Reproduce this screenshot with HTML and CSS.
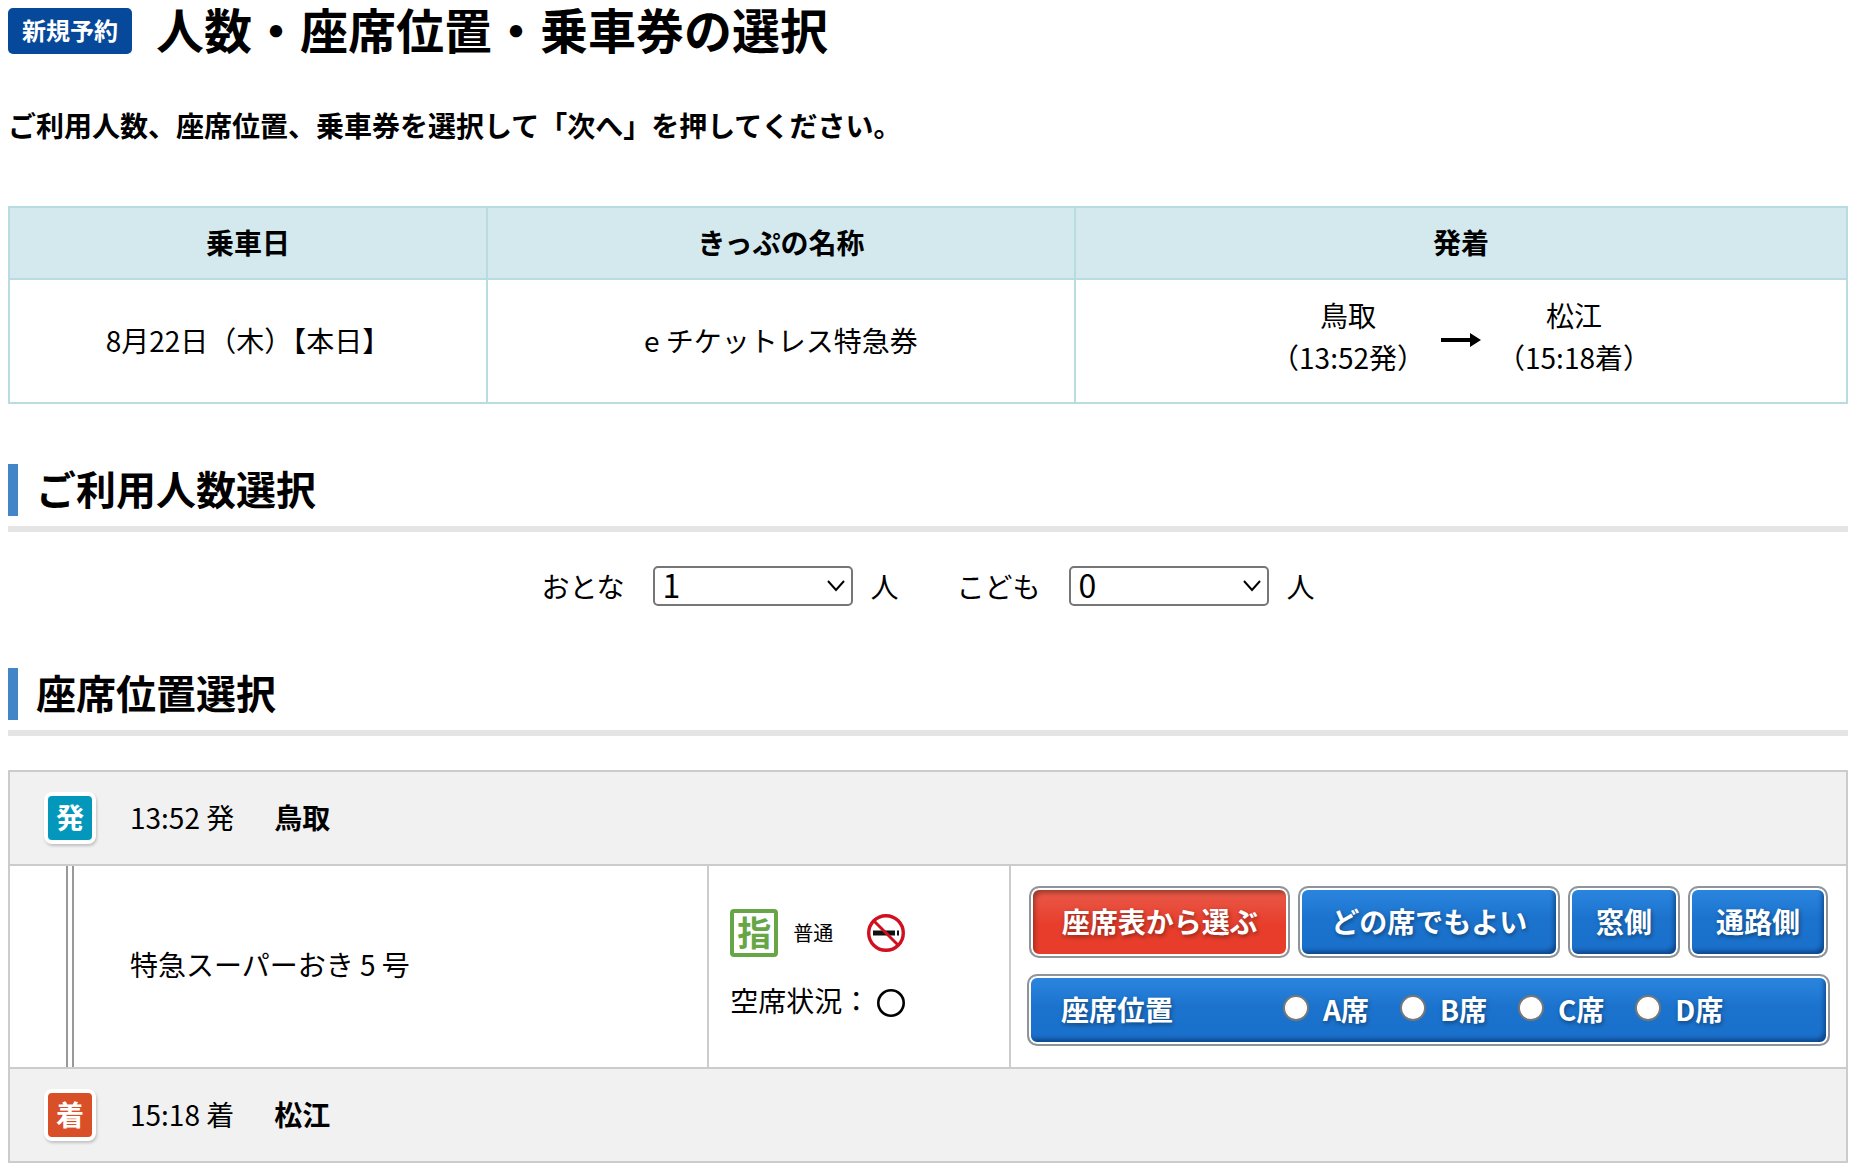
FILE: index.html
```html
<!DOCTYPE html>
<html lang="ja">
<head>
<meta charset="utf-8">
<meta name="viewport" content="width=device-width, initial-scale=1">
<title>人数・座席位置・乗車券の選択</title>
<link rel="stylesheet" href="styles.css">
</head>
<body>
<main class="page">
  <header class="page-head">
    <span class="badge">新規予約</span>
    <h1 class="page-title">人数・座席位置・乗車券の選択</h1>
  </header>
  <p class="lead">ご利用人数、座席位置、乗車券を選択して「次へ」を押してください。</p>

  <table class="summary">
    <colgroup><col class="col-date"><col class="col-name"><col></colgroup>
    <thead>
      <tr><th scope="col">乗車日</th><th scope="col">きっぷの名称</th><th scope="col">発着</th></tr>
    </thead>
    <tbody>
      <tr>
        <td>8月22日（木）【本日】</td>
        <td>e チケットレス特急券</td>
        <td>
          <div class="route">
            <div>鳥取<br>（13:52発）</div>
            <svg class="arrow" viewBox="0 0 40 14" aria-hidden="true"><path d="M0 5H29V0L40 7 29 14V9H0z"/></svg>
            <div>松江<br>（15:18着）</div>
          </div>
        </td>
      </tr>
    </tbody>
  </table>

  <h2 class="section-title">ご利用人数選択</h2>
  <div class="people">
    <div class="people-item">
      <label for="adult">おとな</label>
      <select id="adult" class="select"><option>0</option><option selected>1</option><option>2</option><option>3</option><option>4</option></select>
      <span>人</span>
    </div>
    <div class="people-item">
      <label for="child">こども</label>
      <select id="child" class="select"><option selected>0</option><option>1</option><option>2</option><option>3</option><option>4</option></select>
      <span>人</span>
    </div>
  </div>

  <h2 class="section-title">座席位置選択</h2>
  <section class="trip">
    <div class="stop">
      <span class="stop-mark stop-mark-dep">発</span>
      <span class="stop-time">13:52 発</span>
      <strong class="stop-name">鳥取</strong>
    </div>
    <div class="leg">
      <div class="leg-train"><span class="rail"></span><span class="train-name">特急スーパーおき 5 号</span></div>
      <div class="leg-seat">
        <div class="seat-type">
          <span class="reserved">指</span>
          <span class="seat-class">普通</span>
          <svg class="no-smoking" viewBox="0 0 38 38" role="img" aria-label="禁煙">
            <path d="M6 16.500h22v5H6zM30 16.500h2v5h-2z" fill="#111"/>
            <circle cx="19" cy="19" r="17.300" fill="none" stroke="#d0101f" stroke-width="3.400"/>
            <path d="M7 7l24 24" stroke="#d0101f" stroke-width="3"/>
          </svg>
        </div>
        <div class="vacancy">
          <span>空席状況：</span>
          <svg class="circle" viewBox="0 0 28 28" role="img" aria-label="空席あり"><circle cx="14" cy="14" r="12.700" fill="none" stroke="#000" stroke-width="2.600"/></svg>
        </div>
      </div>
      <div class="leg-choice">
        <div class="buttons">
          <button type="button" class="btn btn-on">座席表から選ぶ</button>
          <button type="button" class="btn">どの席でもよい</button>
          <button type="button" class="btn btn-mid">窓側</button>
          <button type="button" class="btn btn-mid">通路側</button>
        </div>
        <div class="seat-bar" role="radiogroup" aria-labelledby="seat-label">
          <span id="seat-label" class="seat-label">座席位置</span>
          <label class="seat"><input type="radio" name="seat">A席</label>
          <label class="seat"><input type="radio" name="seat">B席</label>
          <label class="seat"><input type="radio" name="seat">C席</label>
          <label class="seat"><input type="radio" name="seat">D席</label>
        </div>
      </div>
    </div>
    <div class="stop">
      <span class="stop-mark stop-mark-arr">着</span>
      <span class="stop-time">15:18 着</span>
      <strong class="stop-name">松江</strong>
    </div>
  </section>
</main>
</body>
</html>
```
FILE: styles.css
```css
* { box-sizing: border-box; }

body {
  margin: 0;
  background: #fff;
  color: #000;
  font: 28px/42px "Noto Sans CJK JP", sans-serif;
}

.page { padding: 0 10px 8px 8px; }

/* Page heading */
.page-head {
  display: flex;
  align-items: flex-start;
  gap: 24px;
  height: 62px;
}
.badge {
  margin-top: 8px;
  padding: 0 14px 2px;
  border-radius: 5px;
  background: #06489a;
  color: #fff;
  font-size: 24px;
  font-weight: 700;
  line-height: 44px;
}
.page-title {
  margin: 0;
  font-size: 48px;
  line-height: 56px;
}
.lead {
  margin: 42px 0 60px;
  font-weight: 700;
}

/* Ticket summary */
.summary {
  width: 100%;
  table-layout: fixed;
  border-collapse: collapse;
  text-align: center;
}
.col-date { width: 26%; }
.col-name { width: 32%; }
.summary th,
.summary td { border: 2px solid #b9dce0; }
.summary th {
  padding: 13px 0 15px;
  background: #d3e9ee;
}
.summary td { padding: 14px 0 24px; }
.summary td:not(:last-child) { padding: 18px 0 20px; }
.route {
  display: flex;
  justify-content: center;
  align-items: center;
  gap: 16px;
}
.arrow {
  width: 40px;
  height: 14px;
  margin-top: 8px;
}

/* Section headings */
.section-title {
  display: flex;
  align-items: flex-start;
  gap: 18px;
  margin: 60px 0 34px;
  padding-bottom: 10px;
  border-bottom: 6px solid #e4e4e4;
  font-size: 40px;
  line-height: 48px;
}
.section-title::before {
  content: "";
  width: 10px;
  height: 52px;
  background: #4286c7;
}

/* Number of passengers */
.people {
  display: flex;
  justify-content: center;
  gap: 58px;
}
.people-item {
  display: flex;
  align-items: center;
  height: 40px;
}
.people-item label { margin-right: 28px; }
.people-item span { margin-left: 18px; }
.select {
  width: 200px;
  height: 40px;
  padding: 0 8px 4px;
  border: 2px solid #767676;
  border-radius: 5px;
  appearance: none;
  color: #000;
  font: 32px/32px "Noto Sans CJK JP", sans-serif;
  background: #fff url("data:image/svg+xml,%3Csvg xmlns='http://www.w3.org/2000/svg' width='18' height='12'%3E%3Cpath d='M1 1l8 9 8-9' fill='none' stroke='%23000' stroke-width='2'/%3E%3C/svg%3E") no-repeat right 6px center;
}
.people + .section-title { margin-top: 62px; }

/* Trip */
.trip { border: 2px solid #ccc; }
.stop {
  display: flex;
  align-items: center;
  height: 92px;
  padding-left: 34px;
  background: #f1f1f1;
}
.stop-mark {
  width: 52px;
  border: 4px solid #fff;
  border-radius: 8px;
  box-shadow: 1px 2px 3px rgba(0, 0, 0, .2);
  color: #fff;
  font-size: 28px;
  font-weight: 700;
  line-height: 42px;
  padding-bottom: 2px;
  text-align: center;
}
.stop-mark-dep { background: #0398bb; }
.stop-mark-arr { background: #d84f28; }
.stop-time { margin: 0 40px 0 34px; }
.stop-time,
.stop-name { padding-bottom: 2px; }

.leg {
  display: grid;
  grid-template-columns: 698fr 304fr 836fr;
  border: solid #ccc;
  border-width: 2px 0;
}
.leg-train {
  display: flex;
  align-items: center;
  gap: 56px;
  padding-left: 56px;
}
.rail {
  align-self: stretch;
  width: 8px;
  border: solid #999;
  border-width: 0 2px;
}
.train-name { padding-bottom: 6px; }
.leg-seat {
  display: flex;
  flex-direction: column;
  gap: 22px;
  padding: 43px 0 0 21px;
  border: solid #ccc;
  border-width: 0 2px;
}
.seat-type {
  display: flex;
  align-items: center;
}
.reserved {
  width: 48px;
  padding-bottom: 2px;
  border: 4px solid #67a646;
  border-radius: 4px;
  color: #67a646;
  font-size: 34px;
  font-weight: 700;
  line-height: 38px;
  text-align: center;
}
.seat-class {
  margin: 0 34px 0 15px;
  font-size: 20px;
}
.no-smoking { width: 38px; height: 38px; }
.vacancy {
  display: flex;
  align-items: center;
  gap: 7px;
}
.circle {
  width: 28px;
  height: 28px;
  margin-top: 6px;
}

/* Seat choice */
.leg-choice { padding: 20px 16px 21px; }
.buttons {
  display: flex;
  gap: 8px;
  padding: 0 2px;
}
.btn,
.seat-bar {
  height: 72px;
  border: 2px solid #8e9499;
  border-radius: 10px;
  background: linear-gradient(#2c86e0, #1b73cd 45%, #1a70cb) padding-box;
  box-shadow: inset 0 0 0 2px #fff, inset -4px -5px 4px rgba(0, 30, 80, .5);
  color: #fff;
  font: 700 28px/42px "Noto Sans CJK JP", sans-serif;
  text-shadow: 1px 2px 4px rgba(0, 0, 0, .4);
}
.btn {
  flex: 1 0 auto;
  padding: 0 20px 2px;
}
.btn-mid {
  flex-grow: 0;
  padding: 0 26px 2px;
}
.btn-on {
  background: linear-gradient(#e95c4b, #e83d2b 55%) padding-box;
  box-shadow: inset 0 0 0 2px #fff, inset 4px 5px 4px rgba(90, 30, 20, .5);
}
.seat-bar {
  display: flex;
  align-items: center;
  margin-top: 16px;
  padding: 0 0 2px 32px;
}
.seat-label { margin-right: 110px; }
.seat {
  display: flex;
  align-items: center;
  margin-right: 31px;
}
.seat input {
  width: 26px;
  height: 26px;
  margin: 0 14px 2px 0;
  appearance: none;
  border: 2px solid #777;
  border-radius: 50%;
  background: #fff;
}
```
